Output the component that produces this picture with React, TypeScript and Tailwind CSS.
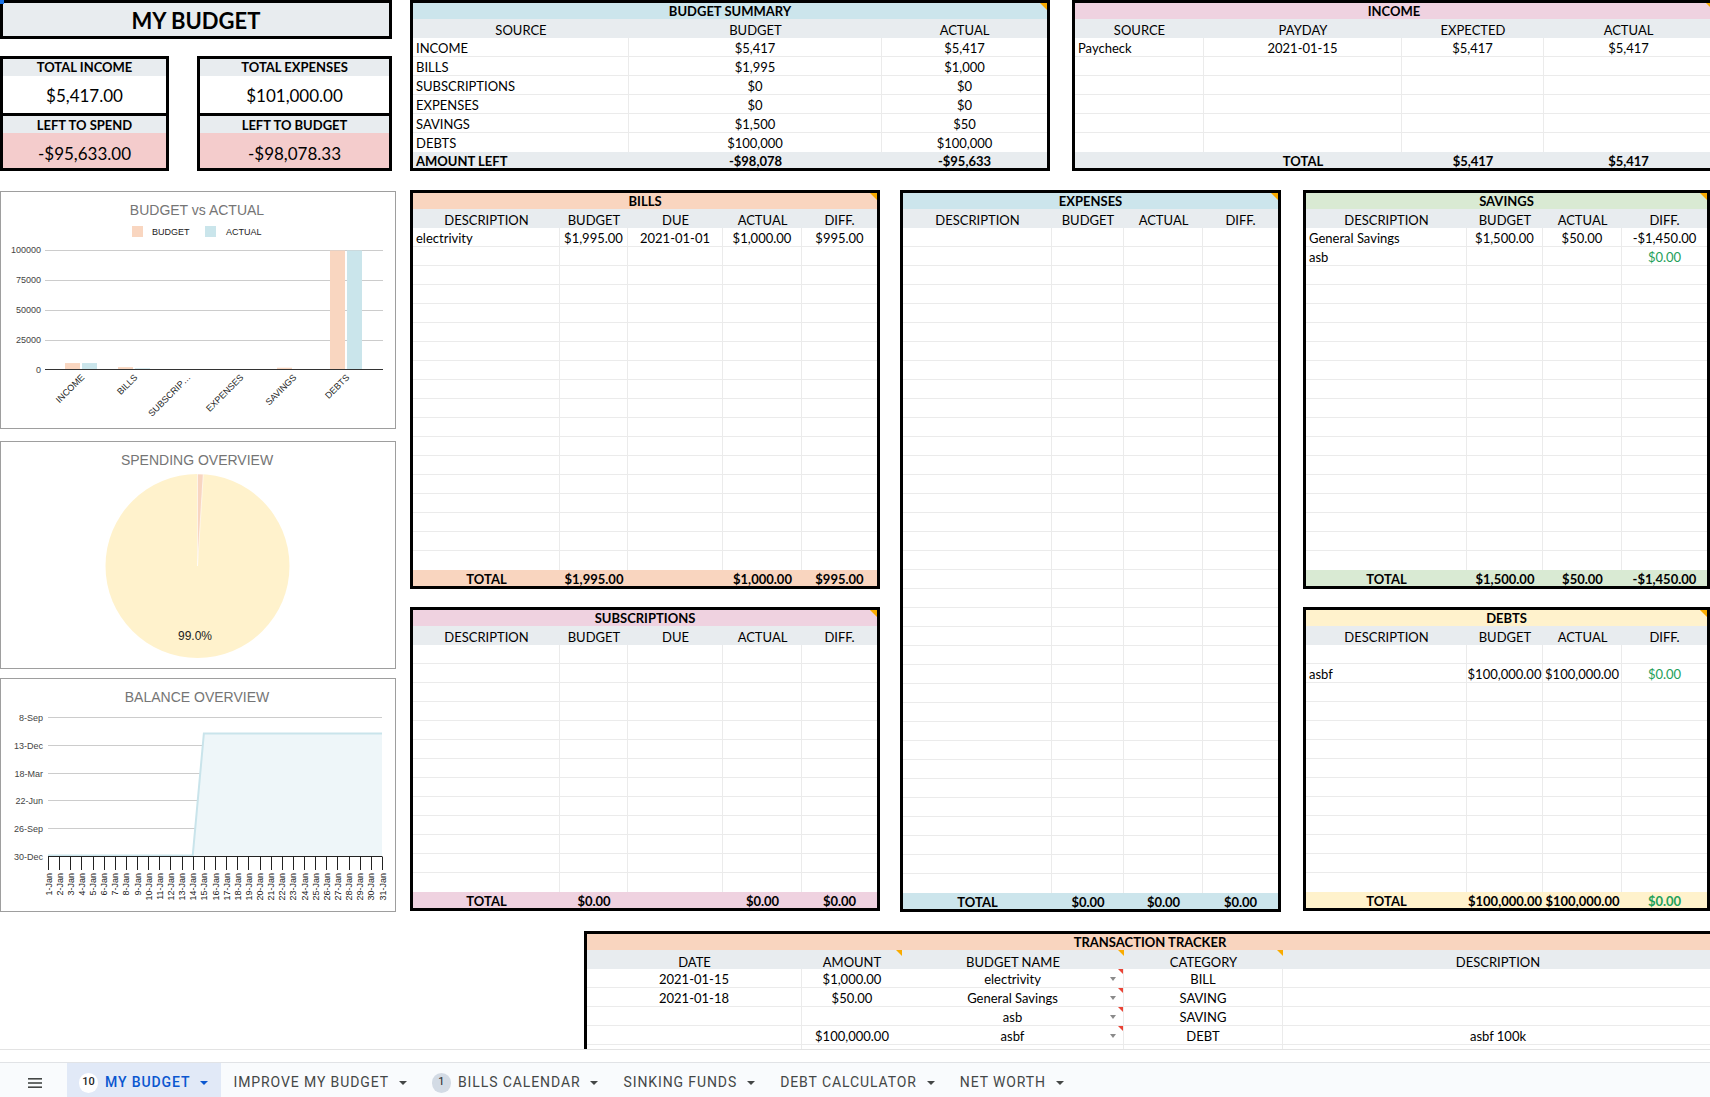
import React from 'react';

type C = string | { t: string; g?: boolean };
const txt = (c: C) => (typeof c === 'string' ? c : c.t);
const isG = (c: C) => typeof c !== 'string' && !!c.g;
const empty = (n: number, cols: number): C[][] => Array.from({ length: n }, () => Array(cols).fill(''));

function Tri() {
  return <div className="absolute right-0 top-0 h-0 w-0 border-l-[7px] border-t-[7px] border-l-transparent border-t-[#f9ab00]" />;
}

function Table(props: {
  outer: string;
  grid: string;
  title: string;
  titleBg: string;
  headers: string[];
  rows: C[][];
  total: C[];
  totalBg: string;
  totalLeft?: boolean;
}) {
  const { outer, grid, title, titleBg, headers, rows, total, totalBg, totalLeft } = props;
  return (
    <div className={`relative shrink-0 border-[3px] border-black bg-white ${outer}`}>
      <div className={`flex h-[16px] items-center justify-center font-bold leading-none ${titleBg}`}>{title}</div>
      <div className={`grid h-[19px] bg-[#e8ecef] ${grid}`}>
        {headers.map((h, i) => (
          <div key={i} className="flex items-center justify-center whitespace-nowrap pt-[4px] leading-none">
            {h}
          </div>
        ))}
      </div>
      {rows.map((r, ri) => (
        <div key={ri} className={`grid h-[19px] ${ri < rows.length - 1 ? 'border-b border-[#ebebeb]' : ''} ${grid}`}>
          {r.map((c, i) => (
            <div
              key={i}
              className={`flex items-center whitespace-nowrap pt-[2px] leading-none ${i < r.length - 1 ? 'border-r border-[#ebebeb]' : ''} ${
                i === 0 ? 'justify-start pl-[3px]' : 'justify-center'
              } ${isG(c) ? 'text-[#1ea05a]' : ''}`}
            >
              {txt(c)}
            </div>
          ))}
        </div>
      ))}
      <div className={`grid h-[16px] font-bold ${totalBg} ${grid}`}>
        {total.map((c, i) => (
          <div
            key={i}
            className={`flex items-center whitespace-nowrap pt-[3px] leading-none ${totalLeft && i === 0 ? 'justify-start pl-[3px]' : 'justify-center'} ${
              isG(c) ? 'text-[#1ea05a]' : ''
            }`}
          >
            {txt(c)}
          </div>
        ))}
      </div>
      <Tri />
    </div>
  );
}

function Stat({ w, l1, v1, l2, v2 }: { w: string; l1: string; v1: string; l2: string; v2: string }) {
  return (
    <div className={`shrink-0 border-[3px] border-black ${w}`}>
      <div className="flex h-[17px] items-center justify-center bg-[#e8ecef] font-bold leading-none">{l1}</div>
      <div className="flex h-[37px] items-center justify-center bg-white pt-[2px] text-[17px] leading-none">{v1}</div>
      <div className="flex h-[20px] items-center justify-center border-t-[3px] border-black bg-[#e8ecef] pt-[2px] font-bold leading-none">{l2}</div>
      <div className="flex h-[35px] items-center justify-center bg-[#f4cccc] pt-[6px] text-[17px] leading-none">{v2}</div>
    </div>
  );
}

const F = 'Liberation Sans, Arial, sans-serif';

function BvAChart() {
  const cats = ['INCOME', 'BILLS', 'SUBSCRIP…', 'EXPENSES', 'SAVINGS', 'DEBTS'];
  const budget = [5417, 1995, 0, 0, 1500, 100000];
  const actual = [5417, 1000, 0, 0, 50, 100000];
  const base = 177.5;
  const k = 119 / 100000;
  return (
    <svg width="394" height="236" viewBox="0 0 394 236" className="block">
      <text x="196" y="23" textAnchor="middle" fontSize="14" fill="#757575" fontFamily={F}>
        BUDGET vs ACTUAL
      </text>
      <rect x="131" y="34" width="11" height="11" fill="#f9d6c0" />
      <text x="151" y="43" fontSize="9" fill="#222" fontFamily={F}>
        BUDGET
      </text>
      <rect x="204" y="34" width="11" height="11" fill="#cae5eb" />
      <text x="225" y="43" fontSize="9" fill="#222" fontFamily={F}>
        ACTUAL
      </text>
      {[25000, 50000, 75000, 100000].map((v) => {
        const y = Math.round(base - v * k) + 0.5;
        return <line key={v} x1="44" x2="382" y1={y} y2={y} stroke="#cccccc" strokeWidth="1" />;
      })}
      {[0, 25000, 50000, 75000, 100000].map((v) => {
        const y = Math.round(base - v * k) + 3;
        return (
          <text key={v} x="40" y={y} textAnchor="end" fontSize="9" fill="#444" fontFamily={F}>
            {v}
          </text>
        );
      })}
      {cats.map((c, i) => {
        const cx = 80 + 53 * i;
        const hb = budget[i] * k;
        const ha = actual[i] * k;
        return (
          <g key={c}>
            {hb > 0 && <rect x={cx - 16} y={base - hb} width="15" height={hb} fill="#f9d6c0" />}
            {ha > 0 && <rect x={cx + 1} y={base - ha} width="15" height={ha} fill="#cae5eb" />}
            <text
              transform={`translate(${cx + 4},${186}) rotate(-45)`}
              textAnchor="end"
              fontSize="9"
              fill="#222"
              fontFamily={F}
            >
              {c}
            </text>
          </g>
        );
      })}
      <line x1="44" x2="382" y1={base} y2={base} stroke="#333" strokeWidth="1" />
    </svg>
  );
}

function PieChart() {
  const cx = 196.5;
  const cy = 124;
  const r = 92;
  const a = (3.6 * Math.PI) / 180;
  return (
    <svg width="394" height="226" viewBox="0 0 394 226" className="block">
      <text x="196" y="23" textAnchor="middle" fontSize="14" fill="#757575" fontFamily={F}>
        SPENDING OVERVIEW
      </text>
      <circle cx={cx} cy={cy} r={r} fill="#fff2cc" />
      <path
        d={`M ${cx} ${cy} L ${cx} ${cy - r} A ${r} ${r} 0 0 1 ${cx + r * Math.sin(a)} ${cy - r * Math.cos(a)} Z`}
        fill="#f8d5c1"
        stroke="#ffffff"
        strokeWidth="0.6"
      />
      <text x="194" y="198" textAnchor="middle" fontSize="12" fill="#222" fontFamily={F}>
        99.0%
      </text>
    </svg>
  );
}

function BalanceChart() {
  const labels = ['8-Sep', '13-Dec', '18-Mar', '22-Jun', '26-Sep', '30-Dec'];
  const x0 = 47;
  const step = (381 - 47) / 30;
  const base = 177.5;
  const top = 54.5;
  const xs = Array.from({ length: 31 }, (_, i) => x0 + i * step);
  return (
    <svg width="394" height="232" viewBox="0 0 394 232" className="block">
      <text x="196" y="23" textAnchor="middle" fontSize="14" fill="#757575" fontFamily={F}>
        BALANCE OVERVIEW
      </text>
      {labels.map((l, i) => {
        const y = Math.round(38 + i * 27.8) + 0.5;
        return (
          <g key={l}>
            {i < 5 && <line x1={x0} x2="381" y1={y} y2={y} stroke="#cccccc" strokeWidth="1" />}
            <text x="42" y={y + 3} textAnchor="end" fontSize="9" fill="#444" fontFamily={F}>
              {l}
            </text>
          </g>
        );
      })}
      <polygon points={`${xs[13]},${base} ${xs[14]},${top} 381,${top} 381,${base}`} fill="#eef6f9" />
      <polyline
        points={`${x0},${base - 1} ${xs[13]},${base - 1} ${xs[14]},${top} 381,${top}`}
        fill="none"
        stroke="#c9e4eb"
        strokeWidth="2"
      />
      <line x1={x0} x2="381" y1={base} y2={base} stroke="#222" strokeWidth="1" />
      {xs.map((x, i) => (
        <g key={i}>
          <line x1={Math.round(x) + 0.5} x2={Math.round(x) + 0.5} y1={base} y2="191" stroke="#222" strokeWidth="1" />
          <text
            transform={`translate(${x + 3.5},194) rotate(-90)`}
            textAnchor="end"
            fontSize="9"
            fill="#222"
            fontFamily={F}
          >
            {`${i + 1}-Jan`}
          </text>
        </g>
      ))}
    </svg>
  );
}

function Tracker() {
  const grid = 'grid-cols-[215px_100px_222px_159px_430px]';
  const heads = ['DATE', 'AMOUNT', 'BUDGET NAME', 'CATEGORY', 'DESCRIPTION'];
  const rows = [
    ['2021-01-15', '$1,000.00', 'electrivity', 'BILL', ''],
    ['2021-01-18', '$50.00', 'General Savings', 'SAVING', ''],
    ['', '', 'asb', 'SAVING', ''],
    ['', '$100,000.00', 'asbf', 'DEBT', 'asbf 100k'],
    ['', '', '', '', ''],
  ];
  return (
    <div className="relative w-[1132px] shrink-0 border-[3px] border-black bg-white">
      <div className="flex h-[16px] items-center justify-center bg-[#f9d5bf] pt-[1px] font-bold leading-none">TRANSACTION TRACKER</div>
      <div className={`grid h-[19px] bg-[#e8ecef] ${grid}`}>
        {heads.map((h, i) => (
          <div key={h} className="relative flex items-center justify-center pt-[5px] leading-none">
            {h}
            {i >= 1 && i <= 3 && <div className="absolute right-0 top-0 h-0 w-0 border-l-[6px] border-t-[6px] border-l-transparent border-t-[#f9ab00]" />}
          </div>
        ))}
      </div>
      {rows.map((r, ri) => (
        <div key={ri} className={`grid h-[19px] border-b border-[#ebebeb] ${grid}`}>
          {r.map((c, i) => (
            <div
              key={i}
              className={`relative flex items-center justify-center whitespace-nowrap pt-[3px] leading-none ${i !== 1 && i !== 4 ? 'border-r border-[#ebebeb]' : ''}`}
            >
              {c}
              {i === 2 && ri < 4 && (
                <>
                  <div className="absolute right-[7px] top-[8px] h-0 w-0 border-l-[3.5px] border-r-[3.5px] border-t-[4px] border-l-transparent border-r-transparent border-t-[#8a8a8a]" />
                  <div className="absolute right-0 top-0 h-0 w-0 border-l-[5px] border-t-[5px] border-l-transparent border-t-[#ea4335]" />
                </>
              )}
            </div>
          ))}
        </div>
      ))}
    </div>
  );
}

function Caret({ cls }: { cls: string }) {
  return <div className={`ml-[10px] h-0 w-0 border-l-[4px] border-r-[4px] border-t-[4px] border-l-transparent border-r-transparent ${cls}`} />;
}

function Tab({ label, badge, active }: { label: string; badge?: string; active?: boolean }) {
  return (
    <div className={`flex items-center pl-[12px] pr-[13px] pt-[5px] ${active ? 'bg-[#e1e9f7] font-medium text-[#0b57d0]' : ''}`}>
      {badge && (
        <div
          className={`mr-[7px] flex h-[20px] min-w-[19px] items-center justify-center rounded-full px-[3px] text-[11px] tracking-normal ${
            active ? 'bg-white text-[#1f1f1f]' : 'bg-[#d3dbe5] text-[#1f1f1f]'
          }`}
        >
          {badge}
        </div>
      )}
      <span className="whitespace-nowrap">{label}</span>
      <Caret cls={active ? 'border-t-[#0b57d0]' : 'border-t-[#444746]'} />
    </div>
  );
}

export default function App() {
  const billsGrid = 'grid-cols-[147px_68px_95px_79px_75px]';
  const expGrid = 'grid-cols-[149px_72px_79px_75px]';
  const savGrid = 'grid-cols-[161px_76px_79px_85px]';
  return (
    <div className="flex h-[1097px] w-[1710px] flex-col overflow-hidden bg-white text-[13px] text-black [font-family:Lato,sans-serif]">
      <div className="relative h-[1049px] shrink-0 overflow-hidden">
        <div className="flex flex-col">
          {/* Row 1 */}
          <div className="flex h-[171px] items-start">
            <div className="flex w-[410px] shrink-0 flex-col">
              <div className="flex h-[39px] w-[392px] items-center justify-center border-[3px] border-black bg-[#e8ecef] pt-[2px] text-[22px] font-bold leading-none">
                MY BUDGET
              </div>
              <div className="mt-[17px] flex">
                <Stat w="w-[169px]" l1="TOTAL INCOME" v1="$5,417.00" l2="LEFT TO SPEND" v2="-$95,633.00" />
                <div className="ml-[28px]">
                  <Stat w="w-[195px]" l1="TOTAL EXPENSES" v1="$101,000.00" l2="LEFT TO BUDGET" v2="-$98,078.33" />
                </div>
              </div>
            </div>
            <Table
              outer="w-[640px]"
              grid="grid-cols-[216px_253px_165px]"
              title="BUDGET SUMMARY"
              titleBg="bg-[#cce5ec]"
              headers={['SOURCE', 'BUDGET', 'ACTUAL']}
              rows={[
                ['INCOME', '$5,417', '$5,417'],
                ['BILLS', '$1,995', '$1,000'],
                ['SUBSCRIPTIONS', '$0', '$0'],
                ['EXPENSES', '$0', '$0'],
                ['SAVINGS', '$1,500', '$50'],
                ['DEBTS', '$100,000', '$100,000'],
              ]}
              total={['AMOUNT LEFT', '-$98,078', '-$95,633']}
              totalBg="bg-[#e8ecef]"
              totalLeft
            />
            <div className="ml-[22px]">
              <Table
                outer="w-[644px]"
                grid="grid-cols-[129px_198px_142px_169px]"
                title="INCOME"
                titleBg="bg-[#efd2e0]"
                headers={['SOURCE', 'PAYDAY', 'EXPECTED', 'ACTUAL']}
                rows={[['Paycheck', '2021-01-15', '$5,417', '$5,417'], ...empty(5, 4)]}
                total={['', 'TOTAL', '$5,417', '$5,417']}
                totalBg="bg-[#e8ecef]"
              />
            </div>
          </div>

          {/* Row 2 */}
          <div className="mt-[19px] flex h-[722px] items-start">
            <div className="flex w-[396px] shrink-0 flex-col">
              <div className="mt-[1px] h-[238px] border border-[#9e9e9e] bg-white">
                <BvAChart />
              </div>
              <div className="mt-[12px] h-[228px] border border-[#9e9e9e] bg-white">
                <PieChart />
              </div>
              <div className="mt-[9px] h-[234px] border border-[#9e9e9e] bg-white">
                <BalanceChart />
              </div>
            </div>
            <div className="ml-[14px] flex flex-col">
              <Table
                outer="w-[470px]"
                grid={billsGrid}
                title="BILLS"
                titleBg="bg-[#f9d5bf]"
                headers={['DESCRIPTION', 'BUDGET', 'DUE', 'ACTUAL', 'DIFF.']}
                rows={[['electrivity', '$1,995.00', '2021-01-01', '$1,000.00', '$995.00'], ...empty(17, 5)]}
                total={['TOTAL', '$1,995.00', '', '$1,000.00', '$995.00']}
                totalBg="bg-[#f9d5bf]"
              />
              <div className="mt-[18px]">
                <Table
                  outer="w-[470px]"
                  grid={billsGrid}
                  title="SUBSCRIPTIONS"
                  titleBg="bg-[#efd2e0]"
                  headers={['DESCRIPTION', 'BUDGET', 'DUE', 'ACTUAL', 'DIFF.']}
                  rows={empty(13, 5)}
                  total={['TOTAL', '$0.00', '', '$0.00', '$0.00']}
                  totalBg="bg-[#efd2e0]"
                />
              </div>
            </div>
            <div className="ml-[20px]">
              <Table
                outer="w-[381px]"
                grid={expGrid}
                title="EXPENSES"
                titleBg="bg-[#cce5ec]"
                headers={['DESCRIPTION', 'BUDGET', 'ACTUAL', 'DIFF.']}
                rows={empty(35, 4)}
                total={['TOTAL', '$0.00', '$0.00', '$0.00']}
                totalBg="bg-[#cce5ec]"
              />
            </div>
            <div className="ml-[22px] flex flex-col">
              <Table
                outer="w-[407px]"
                grid={savGrid}
                title="SAVINGS"
                titleBg="bg-[#d9ead3]"
                headers={['DESCRIPTION', 'BUDGET', 'ACTUAL', 'DIFF.']}
                rows={[
                  ['General Savings', '$1,500.00', '$50.00', '-$1,450.00'],
                  ['asb', '', '', { t: '$0.00', g: true }],
                  ...empty(16, 4),
                ]}
                total={['TOTAL', '$1,500.00', '$50.00', '-$1,450.00']}
                totalBg="bg-[#d9ead3]"
              />
              <div className="mt-[18px]">
                <Table
                  outer="w-[407px]"
                  grid={savGrid}
                  title="DEBTS"
                  titleBg="bg-[#fff2cc]"
                  headers={['DESCRIPTION', 'BUDGET', 'ACTUAL', 'DIFF.']}
                  rows={[['', '', '', ''], ['asbf', '$100,000.00', '$100,000.00', { t: '$0.00', g: true }], ...empty(11, 4)]}
                  total={['TOTAL', '$100,000.00', '$100,000.00', { t: '$0.00', g: true }]}
                  totalBg="bg-[#fff2cc]"
                />
              </div>
            </div>
          </div>

          {/* Row 3 */}
          <div className="ml-[584px] mt-[19px]">
            <Tracker />
          </div>
        </div>
        <div className="absolute left-0 top-0 h-[4px] w-[4px] bg-[#1a73e8]" />
      </div>
      <div className="h-[13px] shrink-0 border-t border-[#e3e3e3] bg-white" />
      <div className="flex h-[35px] shrink-0 items-stretch border-t border-[#e1e3e6] bg-[#f9fbfd] text-[14px] tracking-[0.9px] text-[#444746] [font-family:Roboto,sans-serif]">
        <div className="flex w-[67px] items-center pl-[28px] pt-[5px]">
          <svg width="14" height="10" viewBox="0 0 14 10">
            <rect x="0" y="0" width="14" height="1.6" fill="#444746" />
            <rect x="0" y="4.2" width="14" height="1.6" fill="#444746" />
            <rect x="0" y="8.4" width="14" height="1.6" fill="#444746" />
          </svg>
        </div>
        <Tab label="MY BUDGET" badge="10" active />
        <Tab label="IMPROVE MY BUDGET" />
        <Tab label="BILLS CALENDAR" badge="1" />
        <Tab label="SINKING FUNDS" />
        <Tab label="DEBT CALCULATOR" />
        <Tab label="NET WORTH" />
      </div>
    </div>
  );
}
